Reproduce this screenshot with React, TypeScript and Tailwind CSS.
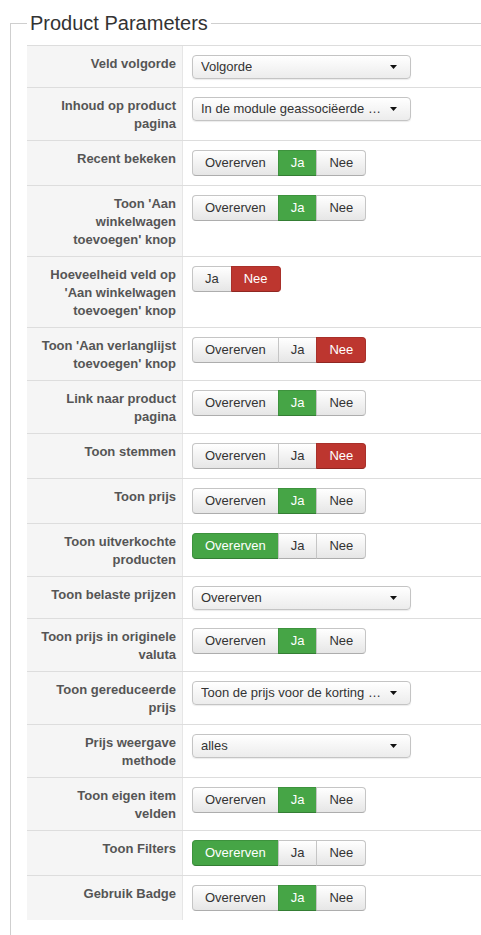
import React from 'react'

type Choice = 'Overerven' | 'Ja' | 'Nee'

type Row =
  | { label: string; kind: 'select'; value: string }
  | { label: string; kind: 'toggle'; options: Choice[]; active: Choice }

const rows: Row[] = [
  { label: 'Veld volgorde', kind: 'select', value: 'Volgorde' },
  { label: 'Inhoud op product pagina', kind: 'select', value: 'In de module geassociëerde …' },
  { label: 'Recent bekeken', kind: 'toggle', options: ['Overerven', 'Ja', 'Nee'], active: 'Ja' },
  { label: "Toon 'Aan winkelwagen toevoegen' knop", kind: 'toggle', options: ['Overerven', 'Ja', 'Nee'], active: 'Ja' },
  { label: "Hoeveelheid veld op 'Aan winkelwagen toevoegen' knop", kind: 'toggle', options: ['Ja', 'Nee'], active: 'Nee' },
  { label: "Toon 'Aan verlanglijst toevoegen' knop", kind: 'toggle', options: ['Overerven', 'Ja', 'Nee'], active: 'Nee' },
  { label: 'Link naar product pagina', kind: 'toggle', options: ['Overerven', 'Ja', 'Nee'], active: 'Ja' },
  { label: 'Toon stemmen', kind: 'toggle', options: ['Overerven', 'Ja', 'Nee'], active: 'Nee' },
  { label: 'Toon prijs', kind: 'toggle', options: ['Overerven', 'Ja', 'Nee'], active: 'Ja' },
  { label: 'Toon uitverkochte producten', kind: 'toggle', options: ['Overerven', 'Ja', 'Nee'], active: 'Overerven' },
  { label: 'Toon belaste prijzen', kind: 'select', value: 'Overerven' },
  { label: 'Toon prijs in originele valuta', kind: 'toggle', options: ['Overerven', 'Ja', 'Nee'], active: 'Ja' },
  { label: 'Toon gereduceerde prijs', kind: 'select', value: 'Toon de prijs voor de korting …' },
  { label: 'Prijs weergave methode', kind: 'select', value: 'alles' },
  { label: 'Toon eigen item velden', kind: 'toggle', options: ['Overerven', 'Ja', 'Nee'], active: 'Ja' },
  { label: 'Toon Filters', kind: 'toggle', options: ['Overerven', 'Ja', 'Nee'], active: 'Overerven' },
  { label: 'Gebruik Badge', kind: 'toggle', options: ['Overerven', 'Ja', 'Nee'], active: 'Ja' },
]

function Select({ value }: { value: string }) {
  return (
    <div className="w-[219px] h-[24px] flex items-center justify-between pl-[8px] pr-[13px] border border-[#c4c4c4] rounded-[4px] bg-gradient-to-b from-white to-[#ececec] shadow-[0_1px_1px_rgba(0,0,0,0.08)] text-[13px] text-[#333]">
      <span className="whitespace-nowrap overflow-hidden">{value}</span>
      <svg width="7" height="4" viewBox="0 0 7 4" className="shrink-0">
        <polygon points="0,0 7,0 3.5,4" fill="#111" />
      </svg>
    </div>
  )
}

function Toggle({ options, active }: { options: Choice[]; active: Choice }) {
  return (
    <div className="flex">
      {options.map((opt, i) => {
        const first = i === 0
        const last = i === options.length - 1
        const on = opt === active
        let tone = 'bg-gradient-to-b from-white to-[#e6e6e6] text-[#333] border-[#c5c5c5] border-b-[#adadad]'
        if (on && opt === 'Nee') tone = 'bg-[#bd362f] text-white border-[#a8302a] border-b-[#8f2722]'
        else if (on) tone = 'bg-[#46a546] text-white border-[#3d923d] border-b-[#347d34]'
        return (
          <div
            key={opt}
            className={
              'h-[26px] px-[12px] flex items-center text-[13px] border ' +
              tone +
              (first ? ' rounded-l-[4px]' : ' -ml-px') +
              (last ? ' rounded-r-[4px]' : '')
            }
          >
            {opt}
          </div>
        )
      })}
    </div>
  )
}

export default function App() {
  return (
    <div className="w-[481px] min-h-[935px] overflow-hidden bg-white pt-[9px] pl-[10px] font-['Liberation_Sans',Arial,sans-serif]">
      <fieldset className="w-[520px] border border-[#cfcfcf] pl-[16px] pb-[30px]">
        <legend className="px-[3px] text-[20px] leading-[28px] text-[#333] mb-[8px]">Product Parameters</legend>
        <div>
          {rows.map((row) => (
            <div key={row.label} className="flex border-t border-[#dddddd]">
              <div className="w-[156px] shrink-0 bg-[#f5f5f5] border-r border-[#e6e6e6] pl-[8px] pr-[6px] pt-[9px] pb-[7px] text-right text-[13px] leading-[18px] font-bold text-[#555]">
                {row.label}
              </div>
              <div className={'flex-1 pl-[9px] ' + (row.kind === 'select' ? 'pt-[9px] pb-[8px]' : 'py-[9px]')}>
                {row.kind === 'select' ? (
                  <Select value={row.value} />
                ) : (
                  <Toggle options={row.options} active={row.active} />
                )}
              </div>
            </div>
          ))}
        </div>
      </fieldset>
    </div>
  )
}
